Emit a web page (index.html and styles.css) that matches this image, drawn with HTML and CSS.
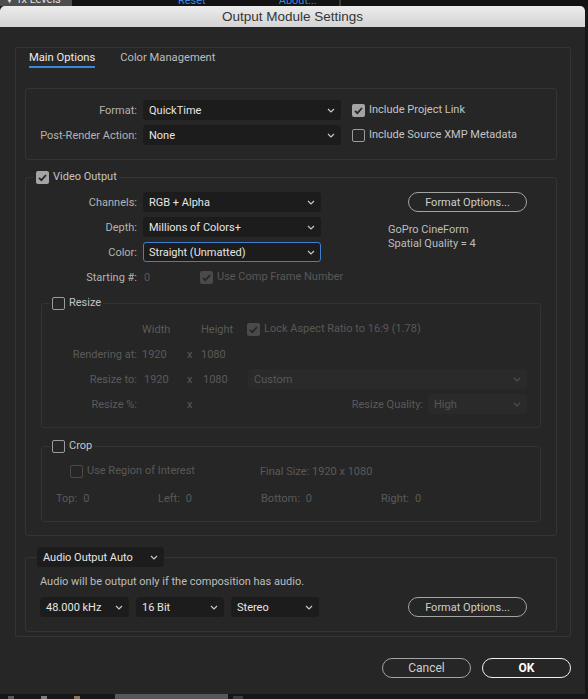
FILE: index.html
```html
<!DOCTYPE html>
<html lang="en">
<head>
    <meta charset="UTF-8">
    <meta name="viewport" content="width=device-width, initial-scale=1.0">
    <title>Output Module Settings</title>
    <link rel="stylesheet" href="styles.css">
</head>
<body>
    <div class="app-strip">
        <div class="strip-item fx-head"><span>&#9660; fx Levels</span></div>
        <div class="strip-item link reset"><span>Reset</span></div>
        <div class="strip-item link about"><span>About...</span></div>
        <div class="strip-divider"></div>
    </div>

    <div class="dialog">
        <div class="titlebar">Output Module Settings</div>
        <div class="dialog-main">
            <div class="panel">
                <div class="tabs">
                    <div class="tab active">Main Options</div>
                    <div class="tab">Color Management</div>
                </div>

                <div class="group format-group">
                    <div class="row">
                        <span class="lbl">Format:</span>
                        <div class="select w-format"><span>QuickTime</span><svg class="chev" width="8" height="5" viewBox="0 0 8 5"><path d="M1 1l3 3 3-3"/></svg></div>
                        <div class="check opt"><span class="box on"><svg width="13" height="13" viewBox="0 0 13 13"><path d="M3 6.8l2.4 2.4L10 4"/></svg></span>Include Project Link</div>
                    </div>
                    <div class="row">
                        <span class="lbl">Post-Render Action:</span>
                        <div class="select w-format"><span>None</span><svg class="chev" width="8" height="5" viewBox="0 0 8 5"><path d="M1 1l3 3 3-3"/></svg></div>
                        <div class="check opt"><span class="box"></span>Include Source XMP Metadata</div>
                    </div>
                </div>

                <fieldset class="group video">
                    <legend class="legend"><div class="check"><span class="box on"><svg width="13" height="13" viewBox="0 0 13 13"><path d="M3 6.8l2.4 2.4L10 4"/></svg></span>Video Output</div></legend>
                    <div class="video-top">
                        <div class="video-fields">
                            <div class="row">
                                <span class="lbl">Channels:</span>
                                <div class="select w-video"><span>RGB + Alpha</span><svg class="chev" width="8" height="5" viewBox="0 0 8 5"><path d="M1 1l3 3 3-3"/></svg></div>
                            </div>
                            <div class="row">
                                <span class="lbl">Depth:</span>
                                <div class="select w-video"><span>Millions of Colors+</span><svg class="chev" width="8" height="5" viewBox="0 0 8 5"><path d="M1 1l3 3 3-3"/></svg></div>
                            </div>
                            <div class="row">
                                <span class="lbl">Color:</span>
                                <div class="select w-video focus"><span>Straight (Unmatted)</span><svg class="chev" width="8" height="5" viewBox="0 0 8 5"><path d="M1 1l3 3 3-3"/></svg></div>
                            </div>
                            <div class="row">
                                <span class="lbl">Starting #:</span>
                                <span class="start-val">0</span>
                                <div class="check disabled"><span class="box on"><svg width="13" height="13" viewBox="0 0 13 13"><path d="M3 6.8l2.4 2.4L10 4"/></svg></span>Use Comp Frame Number</div>
                            </div>
                        </div>
                        <div class="video-side">
                            <button class="pill fmt-btn">Format Options...</button>
                            <div class="codec">GoPro CineForm<br>Spatial Quality = 4</div>
                        </div>
                    </div>

                    <fieldset class="sub resize">
                        <legend class="legend"><div class="check"><span class="box"></span>Resize</div></legend>
                        <div class="rz-row">
                            <span class="rz-lbl"></span>
                            <span class="c1">Width</span><span class="cx"></span><span class="c2">Height</span>
                            <div class="check disabled"><span class="box on"><svg width="13" height="13" viewBox="0 0 13 13"><path d="M3 6.8l2.4 2.4L10 4"/></svg></span>Lock Aspect Ratio to 16:9 (1.78)</div>
                        </div>
                        <div class="rz-row">
                            <span class="rz-lbl">Rendering at:</span>
                            <span class="c1">1920</span><span class="cx">x</span><span class="c2">1080</span>
                        </div>
                        <div class="rz-row">
                            <span class="rz-lbl">Resize to:</span>
                            <span class="c1 pad">1920</span><span class="cx">x</span><span class="c2 pad">1080</span>
                            <div class="select off w-custom"><span>Custom</span><svg class="chev" width="8" height="5" viewBox="0 0 8 5"><path d="M1 1l3 3 3-3"/></svg></div>
                        </div>
                        <div class="rz-row">
                            <span class="rz-lbl">Resize %:</span>
                            <span class="c1"></span><span class="cx">x</span>
                            <span class="spacer"></span>
                            <span class="rq-lbl">Resize Quality:</span>
                            <div class="select off w-quality"><span>High</span><svg class="chev" width="8" height="5" viewBox="0 0 8 5"><path d="M1 1l3 3 3-3"/></svg></div>
                        </div>
                    </fieldset>

                    <fieldset class="sub crop">
                        <legend class="legend"><div class="check"><span class="box"></span>Crop</div></legend>
                        <div class="crop-row">
                            <div class="check disabled roi"><span class="box"></span>Use Region of Interest</div>
                            <span>Final Size: 1920 x 1080</span>
                        </div>
                        <div class="crop-row edges">
                            <span class="edge e-top">Top:<b>0</b></span>
                            <span class="edge e-left">Left:<b>0</b></span>
                            <span class="edge e-bottom">Bottom:<b>0</b></span>
                            <span class="edge">Right:<b>0</b></span>
                        </div>
                    </fieldset>
                </fieldset>

                <fieldset class="group audio">
                    <legend class="legend audio-legend"><div class="select w-audio"><span>Audio Output Auto</span><svg class="chev" width="8" height="5" viewBox="0 0 8 5"><path d="M1 1l3 3 3-3"/></svg></div></legend>
                    <div class="audio-note">Audio will be output only if the composition has audio.</div>
                    <div class="audio-row">
                        <div class="select w-rate"><span>48.000 kHz</span><svg class="chev" width="8" height="5" viewBox="0 0 8 5"><path d="M1 1l3 3 3-3"/></svg></div>
                        <div class="select w-bits"><span>16 Bit</span><svg class="chev" width="8" height="5" viewBox="0 0 8 5"><path d="M1 1l3 3 3-3"/></svg></div>
                        <div class="select w-bits"><span>Stereo</span><svg class="chev" width="8" height="5" viewBox="0 0 8 5"><path d="M1 1l3 3 3-3"/></svg></div>
                        <button class="pill fmt-btn audio-btn">Format Options...</button>
                    </div>
                </fieldset>
            </div>

            <div class="footer">
                <button class="pill foot-btn">Cancel</button>
                <button class="pill foot-btn ok">OK</button>
            </div>
        </div>
    </div>

    <div class="app-bottom">
        <span class="tick t1"></span>
        <span class="tick t2"></span>
        <span class="tick t3"></span>
        <span class="tab-bit"></span>
        <span class="tick t4"></span>
    </div>
</body>
</html>
```

FILE: styles.css
```css
body{
    margin: 0;
    background-color: #171717;
    font-family: Roboto, "Liberation Sans", sans-serif;
    font-size: 11px;
    color: #b3b3b3;
    width: 588px;
    height: 699px;
    overflow: hidden;
}

/* bits of the app showing behind the dialog */
.app-strip{
    height: 6px;
    display: flex;
    background-color: #131313;
}

.strip-item{
    height: 6px;
    overflow: hidden;
    font-size: 11px;
    line-height: 14px;
}

.strip-item span{
    display: block;
    margin-top: -7px;
    white-space: nowrap;
}

.fx-head{
    width: 68px;
    padding-left: 4px;
    background-color: #4e4e4e;
    color: #e0e0e0;
}

.link{
    color: #2f8ee8;
}

.link span{
    margin-top: -6px;
}

.reset{
    margin-left: 106px;
}

.about{
    margin-left: 73px;
}

.strip-divider{
    width: 2px;
    height: 6px;
    margin-left: 22px;
    background-color: #3a3a3a;
}

.dialog{
    width: 585px;
    background-color: #262626;
    border-radius: 5px 5px 0 0;
}

.titlebar{
    height: 21px;
    line-height: 21px;
    text-align: center;
    font-family: "Liberation Sans", Arial, sans-serif;
    font-size: 13.5px;
    color: #363636;
    background: linear-gradient(#ececec, #d3d3d3);
    border-radius: 5px 5px 0 0;
}

.dialog-main{
    padding: 20px 14px 16px 15px;
}

.panel{
    border: 1px solid #343434;
    border-radius: 2px;
    padding-bottom: 4px;
}

.tabs{
    display: flex;
    gap: 25px;
    padding: 3px 0 0 13px;
}

.tab{
    line-height: 14px;
    font-size: 11.2px;
    padding-bottom: 1px;
    border-bottom: 2px solid transparent;
    color: #bcbcbc;
}

.tab.active{
    color: #ececec;
    border-bottom-color: #3b87dd;
}

/* group boxes */
.group{
    margin: 0 13px 0 9px;
    border: 1px solid #343434;
    border-radius: 3px;
    padding: 0;
    min-width: 0;
}

.format-group{
    margin-top: 20px;
    padding: 11px 0 14px;
}

.legend{
    margin-left: 8px;
    padding: 0 2px;
    height: 14px;
}

.row{
    display: flex;
    align-items: center;
    height: 20px;
    white-space: nowrap;
}

.row + .row{
    margin-top: 5px;
}

.lbl{
    width: 111px;
    margin-right: 6px;
    text-align: right;
    flex-shrink: 0;
}

.select{
    box-sizing: border-box;
    height: 20px;
    display: flex;
    align-items: center;
    justify-content: space-between;
    padding: 0 5px 0 5px;
    background-color: #1c1c1c;
    border: 1px solid #1c1c1c;
    border-radius: 3px;
    color: #e6e6e6;
    white-space: nowrap;
    flex-shrink: 0;
}

.chev{
    fill: none;
    stroke: #c8c8c8;
    stroke-width: 1.2;
}

.select.focus{
    border-color: #3d7fd2;
}

.select.off{
    background-color: #2a2a2a;
    border-color: #2a2a2a;
    color: #575757;
}

.select.off .chev{
    stroke: #4e4e4e;
}

.w-format{ width: 198px; }
.w-video{ width: 178px; }
.w-custom{ width: 279px; margin-left: 1px; }
.w-quality{ width: 99px; }
.w-audio{ width: 127px; }
.w-rate{ width: 89px; }
.w-bits{ width: 88px; }

/* checkboxes */
.check{
    display: flex;
    align-items: center;
    gap: 4px;
    height: 14px;
    line-height: 14px;
    color: #c4c4c4;
    white-space: nowrap;
}

.box{
    box-sizing: border-box;
    width: 13px;
    height: 13px;
    border: 1.5px solid #9c9c9c;
    border-radius: 2px;
    display: inline-block;
    flex-shrink: 0;
}

.box.on{
    border: none;
    background-color: #a4a4a4;
}

.box svg{
    display: block;
    fill: none;
    stroke: #262626;
    stroke-width: 1.8;
}

.check.disabled{
    color: #585858;
}

.check.disabled .box{
    border-color: #4a4a4a;
}

.check.disabled .box.on{
    background-color: #4a4a4a;
}

.opt{
    margin-left: 11px;
}

/* video output */
.video{
    margin-top: 10px;
    padding: 8px 0 13px;
}

.video-top{
    display: flex;
}

.video-fields{
    width: 295px;
    flex-shrink: 0;
}

.start-val{
    width: 56px;
    margin-left: 1px;
    flex-shrink: 0;
    color: #595959;
}

.video-side{
    margin-left: 67px;
}

.pill{
    box-sizing: border-box;
    height: 20px;
    border: 1.5px solid #a3a3a3;
    border-radius: 10px;
    background: transparent;
    color: #cfcfcf;
    font-family: Roboto, "Liberation Sans", sans-serif;
    font-size: 11px;
    padding: 0;
}

.fmt-btn{
    width: 119px;
    display: block;
}

.video-side .fmt-btn{
    margin-left: 20px;
}

.codec{
    margin-top: 11px;
    line-height: 14px;
    color: #bdbdbd;
}

.sub{
    margin: 0 15px;
    border: 1px solid #333333;
    border-radius: 3px;
    min-width: 0;
}

.resize{
    margin-top: 9px;
    padding: 9px 13px 13px 0;
}

.rz-row{
    display: flex;
    align-items: center;
    height: 20px;
    color: #5a5a5a;
    white-space: nowrap;
}

.rz-row + .rz-row{
    margin-top: 5px;
}

.rz-lbl{
    width: 95px;
    margin-right: 5px;
    text-align: right;
}

.c1{ width: 45px; }
.cx{ width: 14px; }
.c2{ width: 46px; }

.pad{
    box-sizing: border-box;
    padding-left: 2px;
}

.spacer{
    flex: 1;
}

.rq-lbl{
    margin-right: 5px;
}

.crop{
    margin-top: 11px;
    padding: 8px 0 13px;
}

.crop-row{
    display: flex;
    align-items: center;
    height: 20px;
    color: #5a5a5a;
    white-space: nowrap;
}

.roi{
    margin-left: 28px;
    width: 190px;
}

.edges{
    margin-top: 7px;
    padding-left: 14px;
}

.edge b{
    font-weight: normal;
    margin-left: 6px;
}

.e-top{ width: 102px; }
.e-left{ width: 103px; }
.e-bottom{ width: 120px; }

/* audio */
.audio{
    margin-top: 11px;
    padding: 8px 0 14px;
}

.audio-legend{
    margin-left: 11px;
    padding: 0;
    height: 20px;
}

.audio-note{
    margin-left: 14px;
    line-height: 14px;
    color: #bdbdbd;
}

.audio-row{
    display: flex;
    align-items: center;
    gap: 7px;
    margin: 8px 0 0 14px;
}

.audio-btn{
    margin-left: 82px;
}

.footer{
    display: flex;
    justify-content: flex-end;
    gap: 11px;
    margin-top: 21px;
}

.foot-btn{
    width: 89px;
    font-size: 12px;
}

.foot-btn.ok{
    border-color: #f0f0f0;
    color: #ffffff;
    font-weight: 700;
}

.app-bottom{
    height: 5px;
    display: flex;
    align-items: flex-end;
    background-color: #161616;
}

.tick{
    height: 3px;
    width: 6px;
    background-color: #5a5a5a;
}

.t1{ margin-left: 8px; }
.t2{ margin-left: 27px; background-color: #7c7c7c; }
.t3{ margin-left: 27px; background-color: #85765a; }

.tab-bit{
    margin-left: 35px;
    width: 113px;
    height: 5px;
    background-color: #575757;
}

.t4{ margin-left: 5px; width: 10px; background-color: #3c3c3c; }
```
